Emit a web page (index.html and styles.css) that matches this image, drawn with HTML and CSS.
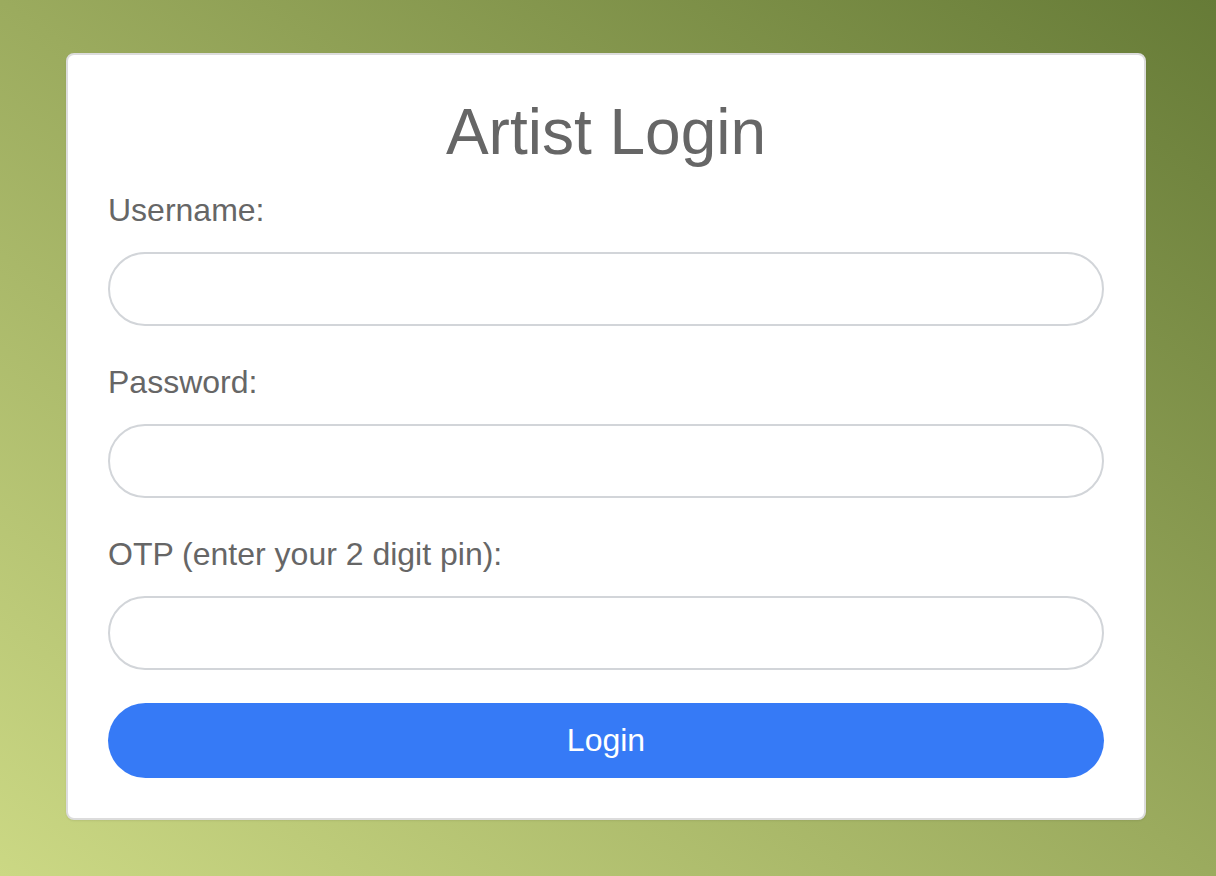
FILE: index.html
```html
<!DOCTYPE html>
<html lang="en">
<head>
<meta charset="utf-8">
<title>Artist Login</title>
<link rel="stylesheet" href="styles.css">
</head>
<body>
<main class="card">
  <h1 class="title">Artist Login</h1>
  <form class="form">
    <label class="label" for="username">Username:</label>
    <input class="field" id="username" type="text">
    <label class="label" for="password">Password:</label>
    <input class="field" id="password" type="password">
    <label class="label" for="otp">OTP (enter your 2 digit pin):</label>
    <input class="field field-last" id="otp" type="text">
    <button class="btn" type="button">Login</button>
  </form>
</main>
</body>
</html>
```

FILE: styles.css
```css
html, body {
  margin: 0;
  padding: 0;
  height: 100%;
}
body {
  background: linear-gradient(to top right, #cbd884 0%, #9bab5e 50%, #667b37 100%);
  font-family: "Liberation Sans", Arial, Helvetica, sans-serif;
  color: #666;
  padding-top: 53px;
  box-sizing: border-box;
}
.card {
  box-sizing: border-box;
  width: 1080px;
  margin: 0 0 0 66px;
  background: #fff;
  border: 2px solid #dcdcdc;
  border-radius: 8px;
  padding: 40px;
  box-shadow: 0 1px 2px rgba(0,0,0,0.08);
}
.title {
  margin: 0 0 23px;
  font-size: 64px;
  line-height: 74px;
  font-weight: normal;
  text-align: center;
  color: #666;
}
.form {
  display: flex;
  flex-direction: column;
}
.label {
  display: block;
  font-size: 32px;
  line-height: 37px;
  margin-bottom: 23px;
  color: #666;
}
.field {
  box-sizing: border-box;
  height: 74px;
  width: 100%;
  border: 2px solid #d2d5d9;
  border-radius: 37px;
  padding: 0 24px;
  font-size: 32px;
  font-family: inherit;
  margin: 0 0 38px;
  background: #fff;
  outline: none;
}
.field-last {
  margin-bottom: 33px;
}
.btn {
  height: 75px;
  width: 100%;
  border: none;
  border-radius: 38px;
  background: #367af6;
  color: #fff;
  font-family: inherit;
  font-size: 32px;
  cursor: pointer;
}
```
